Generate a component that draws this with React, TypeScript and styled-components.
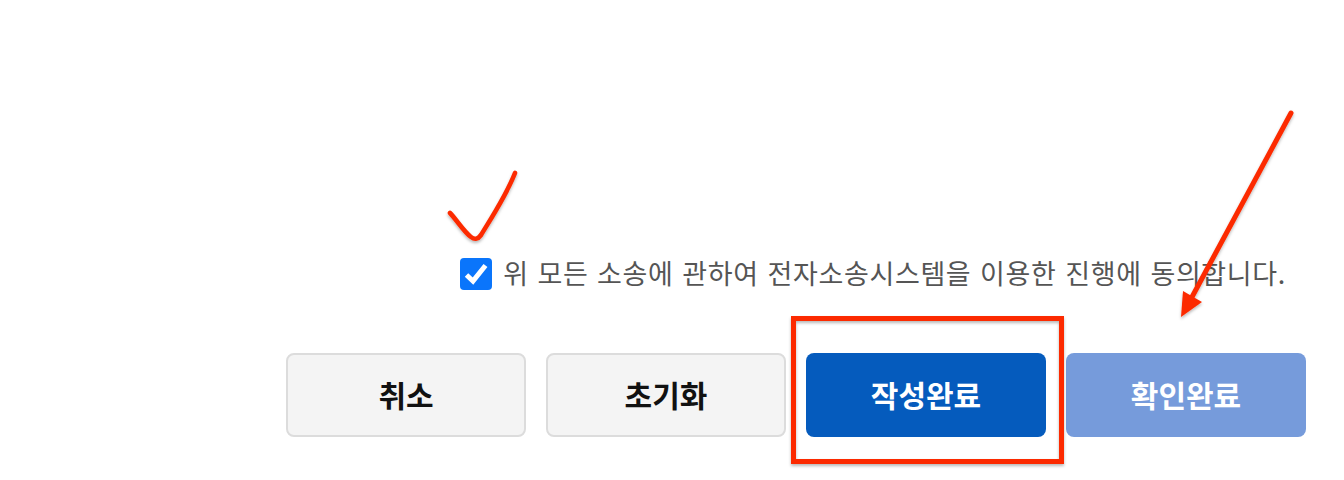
import React, {useState} from 'react';
import styled, {createGlobalStyle} from "styled-components";

const GlobalStyle = createGlobalStyle`
  html, body {
    margin: 0;
    background: #fff;
  }

  body {
    font-family: "Noto Sans CJK KR", "Liberation Sans", sans-serif;
  }
`

type ButtonKind = 'plain' | 'primary' | 'muted';

const buttons: { label: string, kind: ButtonKind }[] = [
    {label: '취소', kind: 'plain'},
    {label: '초기화', kind: 'plain'},
    {label: '작성완료', kind: 'primary'},
    {label: '확인완료', kind: 'muted'},
];

const App = () => {
    const [agreed, setAgreed] = useState(true);

    return (
        <Page>
            <GlobalStyle/>
            <Agreement>
                <HiddenInput type="checkbox" checked={agreed} onChange={() => setAgreed(!agreed)}/>
                <CheckBox $checked={agreed}>
                    <svg width="26" height="24" viewBox="0 0 26 24" fill="none">
                        <path d="M3.5 13L10 19L22.5 3.5" stroke="#fff" strokeWidth="5"/>
                    </svg>
                </CheckBox>
                <AgreementText>위 모든 소송에 관하여 전자소송시스템을 이용한 진행에 동의합니다.</AgreementText>
            </Agreement>
            <ButtonRow>
                {buttons.map(value => <ActionButton key={value.label} $kind={value.kind}>{value.label}</ActionButton>)}
            </ButtonRow>
            <Marks width="1344" height="480" viewBox="0 0 1344 480" fill="none">
                <defs>
                    <filter id="markShadow" x="-10%" y="-10%" width="120%" height="120%">
                        <feDropShadow dx="0" dy="2" stdDeviation="1.5" floodColor="#000" floodOpacity="0.28"/>
                    </filter>
                </defs>
                <g filter="url(#markShadow)">
                    <path d="M450 213C456 219 464 232 471 237C475 240 478 239 481 235C490 220 506 196 515 173"
                          stroke="#fc2c03" strokeWidth="4.6" strokeLinecap="round" strokeLinejoin="round"/>
                    <path d="M1291 113L1192 297" stroke="#fc2c03" strokeWidth="5" strokeLinecap="round"/>
                    <path d="M1181 317L1183 291L1202 302Z" fill="#fc2c03"/>
                    <rect x="793.5" y="318.5" width="268" height="143" stroke="#fc2c03" strokeWidth="5"/>
                </g>
            </Marks>
        </Page>
    );
};

const Page = styled.div`
  position: relative;
  box-sizing: border-box;
  width: 1344px;
  height: 480px;
  padding: 252px 38px 0 0;
  overflow: hidden;
  display: flex;
  flex-direction: column;
  align-items: flex-end;
  background: #fff;
`

const Agreement = styled.label`
  height: 44px;
  display: flex;
  align-items: center;
  gap: 11px;
  margin-right: 20px;
`

const HiddenInput = styled.input`
  display: none;
`

const CheckBox = styled.span<{ $checked: boolean }>`
  width: 32px;
  height: 32px;
  border-radius: 4px;
  display: flex;
  align-items: center;
  justify-content: center;
  background: ${({$checked}) => $checked ? '#0a75fb' : '#fff'};
`

const AgreementText = styled.span`
  font-size: 27px;
  word-spacing: 2px;
  letter-spacing: 0.65px;
  line-height: 42px;
  padding-bottom: 2px;
  color: #555;
  white-space: nowrap;
`

const ButtonRow = styled.div`
  display: flex;
  gap: 20px;
  margin-top: 57px;
`

const kindStyles = {
    plain: 'background: #f4f4f4; color: #111; border: 2px solid #dcdcdc;',
    primary: 'background: #055bbd; color: #fff; border: none;',
    muted: 'background: #769bdb; color: #fff; border: none;',
};

const ActionButton = styled.button<{ $kind: ButtonKind }>`
  box-sizing: border-box;
  width: 240px;
  height: 84px;
  padding: 0 0 2px;
  border-radius: 8px;
  font-family: inherit;
  font-size: 30px;
  font-weight: 700;
  ${({$kind}) => kindStyles[$kind]}
`

const Marks = styled.svg`
  position: absolute;
  top: 0;
  left: 0;
  pointer-events: none;
`

export default App;
